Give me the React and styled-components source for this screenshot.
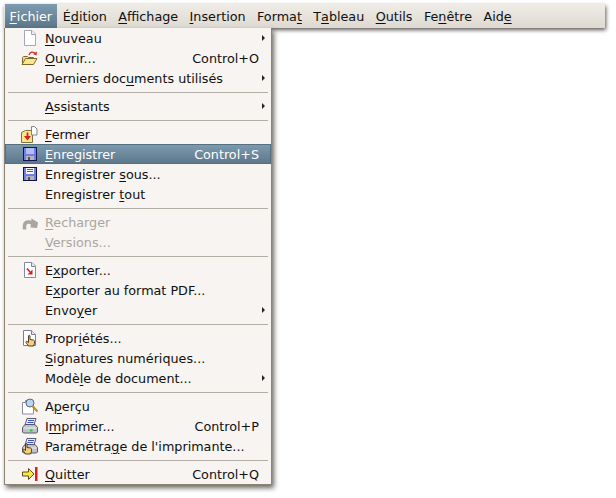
import React from "react";
import styled, { createGlobalStyle } from "styled-components";

const GlobalStyle = createGlobalStyle`
  html, body {
    margin: 0;
    background: #fff;
  }
  body {
    font-family: "DejaVu Sans", sans-serif;
    font-size: 12.75px;
    color: #101010;
  }
`;

const Window = styled.div`
  position: relative;
  width: 616px;
  height: 498px;
  padding: 4px 11px 0 4px;
  box-sizing: border-box;
  overflow: hidden;
`;

const MenuBar = styled.div`
  display: flex;
  height: 24px;
  padding-left: 1px;
  background: linear-gradient(#efece7, #dedad2);
  box-shadow: 1px 2px 4px rgba(40, 35, 30, 0.75);
`;

const BarItem = styled.div`
  display: flex;
  align-items: center;
  height: 24px;
  padding: 0 5.7px;
  box-sizing: border-box;
  color: ${(p) => (p.$active ? "#fff" : "#101010")};
  background: ${(p) => (p.$active ? "linear-gradient(#7d9cb1, #5c7689)" : "none")};
  white-space: nowrap;

  &:first-child {
    padding: 0 5px 0 4.5px;
  }
`;

const Dropdown = styled.div`
  position: absolute;
  left: 4px;
  top: 28px;
  width: 268px;
  height: 457px;
  box-sizing: border-box;
  border: 1px solid #8c8172;
  border-top: 0;
  background: #f7f4f1;
  box-shadow: 2px 3px 5px rgba(40, 35, 30, 0.7);
`;

const Row = styled.div`
  display: grid;
  grid-template-columns: 40px 1fr auto 12px;
  align-items: center;
  height: 20px;
  color: ${(p) => (p.$disabled ? "#a9a6a0" : p.$active ? "#fff" : "#101010")};
  background: ${(p) => (p.$active ? "linear-gradient(#7d9cb1, #5c7689)" : "none")};
  box-shadow: ${(p) => (p.$active ? "inset 0 0 0 1px #56707f" : "none")};
  white-space: nowrap;
`;

const IconSlot = styled.span`
  display: flex;
  justify-content: flex-end;
  padding-right: 7px;
`;

const Shortcut = styled.span`
  text-align: right;
`;

const Arrow = styled.span`
  justify-self: end;
  margin-right: 6px;
  width: 0;
  height: 0;
  border-left: 3px solid #222;
  border-top: 3px solid transparent;
  border-bottom: 3px solid transparent;
`;

const Separator = styled.div`
  height: 1px;
  margin: 4px 3px 3px;
  background: #b3aea5;
`;

const Key = styled.span`
  text-decoration: underline;
  text-decoration-thickness: 1px;
  text-underline-offset: 2px;
`;

/* 16x16 drawings of the old Office menu icons */
const Svg = ({ children }) => (
  <svg width="16" height="16" viewBox="0 0 16 16" shapeRendering="crispEdges">
    {children}
  </svg>
);

const NewIcon = () => (
  <svg width="16" height="16" viewBox="0 0 16 16">
    <path d="M2.5.5h7.5l3.5 3.5v11.5h-11z" fill="#fff" stroke="#a4a6b4" />
    <path d="M9.5.5v4h4" fill="#eeeef2" stroke="#a4a6b4" />
  </svg>
);

const OpenIcon = () => (
  <svg width="17" height="16" viewBox="0 0 17 16">
    <path d="M1.5 14V7.5l1-1h4l1 1h5v2" fill="#f4dc84" stroke="#7b6a2c" />
    <path d="M1 14.5l3.5-6H16l-3.5 6z" fill="#fbe78a" stroke="#7b6a2c" />
    <path d="M8 5C9 2 12.5 1 14 3.5" fill="none" stroke="#d42a1c" strokeWidth="1.3" />
    <path d="M16 1.5l-.5 4-3.5-1.5z" fill="#d42a1c" />
  </svg>
);

const CloseIcon = () => (
  <svg width="17" height="17" viewBox="0 0 17 17">
    <path d="M.5 6.5l4-2h7v12H.5z" fill="#f8e88e" stroke="#7c7040" />
    <path d="M10.5.5h3l2.5 2.5v6h-5.5z" fill="#fff" stroke="#80828e" />
    <path d="M6.5 6.5v5" stroke="#d8201c" strokeWidth="1.8" />
    <path d="M3 10l3.5 4.5L10 10z" fill="#d8201c" />
  </svg>
);

const SaveIcon = ({ red }) => (
  <Svg>
    <rect x="1.5" y="1.5" width="13" height="13" fill="#6e7ee6" stroke="#14144c" />
    <rect x="4" y="2" width="8" height="6" fill={red ? "#f8f8fc" : "#b4bcf4"} />
    {red && <rect x="5" y="3" width="6" height="1" fill="#e0242c" />}
    {red && <rect x="5" y="5" width="6" height="1" fill="#e0242c" />}
    <rect x="4" y="10" width="8" height="4" fill="#b4b4ba" />
    <rect x="6" y="11" width="2" height="3" fill="#50505c" />
  </Svg>
);

const ReloadIcon = () => (
  <svg width="16" height="16" viewBox="0 0 16 16">
    <path d="M2.5 15.5V12C2.5 8 6.5 7 10 9" fill="none" stroke="#a9a6a0" strokeWidth="3.5" />
    <path d="M9.5 4.5L16 8.5l-1 5.5-6.5-.5z" fill="#a9a6a0" />
  </svg>
);

const ExportIcon = () => (
  <svg width="16" height="16" viewBox="0 0 16 16">
    <path d="M2.5.5h7.5l3.5 3.5v11.5h-11z" fill="#fff" stroke="#868a9e" />
    <path d="M9.5.5v4h4" fill="#e6e6ea" stroke="#868a9e" />
    <path d="M5 6.5l3 3.5" stroke="#d8201c" strokeWidth="1.6" />
    <path d="M10.5 7.5v5h-5z" fill="#d8201c" />
  </svg>
);

const Hand = ({ x = 0, y = 0 }) => (
  <g transform={`translate(${x} ${y})`}>
    <path
      d="M3.5 1.5c0-1 1.5-1 1.5 0V5l3.5.5c.8.2 1 .8 1 1.5v2l-1 2.5h-5L1 8c-.5-1 .5-1.5 1.2-1L3.5 8z"
      fill="#f7cf7c"
      stroke="#3c2e14"
      strokeWidth=".9"
    />
  </g>
);

const PropsIcon = () => (
  <svg width="16" height="17" viewBox="0 0 16 17">
    <path d="M1.5.5h8l4 4v11h-12z" fill="#fff" stroke="#7c7e90" />
    <path d="M9.5.5v4h4" fill="#e6e6ea" stroke="#7c7e90" />
    <Hand x={3} y={4.5} />
  </svg>
);

const PreviewIcon = () => (
  <svg width="17" height="17" viewBox="0 0 17 17">
    <path d="M1.5 4.5h3v-2h6l2 2V16h-11z" fill="#fff" stroke="#8a8ca0" />
    <circle cx="9" cy="5" r="4" fill="#bcd6f2" stroke="#56688a" />
    <path d="M11.5 8l5 5.5" stroke="#c08c2c" strokeWidth="2.2" />
  </svg>
);

const Printer = () => (
  <>
    <path d="M5 .5h9l-2 6.5H3z" fill="#e8ecf8" stroke="#484c62" strokeWidth=".9" />
    <path d="M6 2.5h6M5.5 4.5h6" stroke="#3c54b8" strokeWidth="1" />
    <path d="M3 6.5h10l2.5 3V14l-1 1h-13l-1-1V9.5z" fill="#c0c2c8" stroke="#484c62" strokeWidth=".9" />
    <path d="M1.5 10h13" stroke="#f0f2f6" />
  </>
);

const PrintIcon = () => (
  <svg width="16" height="16" viewBox="0 0 16 16">
    <Printer />
    <rect x="8" y="11.5" width="2.5" height="2" fill="#1cc838" />
  </svg>
);

const PrintSetupIcon = () => (
  <svg width="16" height="17" viewBox="0 0 16 17">
    <Printer />
    <Hand x={0} y={4.5} />
  </svg>
);

const QuitIcon = () => (
  <svg width="16" height="16" viewBox="0 0 16 16">
    <path d="M.5 6h6V2.5l5.5 5.5-5.5 5.5V10h-6z" fill="#f8ea40" stroke="#5c4e14" />
    <rect x="13" y="1" width="2.5" height="14" fill="#d8201c" />
  </svg>
);

const bar = [
  { label: <><Key>F</Key>ichier</>, active: true },
  { label: <>É<Key>d</Key>ition</> },
  { label: <><Key>A</Key>ffichage</> },
  { label: <><Key>I</Key>nsertion</> },
  { label: <>Forma<Key>t</Key></> },
  { label: <>T<Key>a</Key>bleau</> },
  { label: <><Key>O</Key>utils</> },
  { label: <>Fe<Key>n</Key>être</> },
  { label: <>Aid<Key>e</Key></> },
];

const groups = [
  [
    { icon: <NewIcon />, label: <><Key>N</Key>ouveau</>, sub: true },
    { icon: <OpenIcon />, label: <><Key>O</Key>uvrir...</>, shortcut: "Control+O" },
    { label: <>Derniers doc<Key>u</Key>ments utilisés</>, sub: true },
  ],
  [{ label: <><Key>A</Key>ssistants</>, sub: true }],
  [
    { icon: <CloseIcon />, label: <><Key>F</Key>ermer</> },
    { icon: <SaveIcon />, label: <><Key>E</Key>nregistrer</>, shortcut: "Control+S", active: true },
    { icon: <SaveIcon red />, label: <>Enregistrer <Key>s</Key>ous...</> },
    { label: <>Enregistrer <Key>t</Key>out</> },
  ],
  [
    { icon: <ReloadIcon />, label: <><Key>R</Key>echarger</>, disabled: true },
    { label: <><Key>V</Key>ersions...</>, disabled: true },
  ],
  [
    { icon: <ExportIcon />, label: <>E<Key>x</Key>porter...</> },
    { label: <>E<Key>x</Key>porter au format PDF...</> },
    { label: <>Envo<Key>y</Key>er</>, sub: true },
  ],
  [
    { icon: <PropsIcon />, label: <>Propr<Key>i</Key>étés...</> },
    { label: <><Key>S</Key>ignatures numériques...</> },
    { label: <>Modè<Key>l</Key>e de document...</>, sub: true },
  ],
  [
    { icon: <PreviewIcon />, label: <>A<Key>p</Key>erçu</> },
    { icon: <PrintIcon />, label: <>I<Key>m</Key>primer...</>, shortcut: "Control+P" },
    { icon: <PrintSetupIcon />, label: <>Paramétra<Key>g</Key>e de l'imprimante...</> },
  ],
  [{ icon: <QuitIcon />, label: <><Key>Q</Key>uitter</>, shortcut: "Control+Q" }],
];

const App = () => (
  <Window>
    <GlobalStyle />
    <MenuBar>
      {bar.map((item, i) => (
        <BarItem key={i} $active={item.active}>
          {item.label}
        </BarItem>
      ))}
    </MenuBar>
    <Dropdown>
      {groups.map((group, g) => (
        <React.Fragment key={g}>
          {g > 0 && <Separator />}
          {group.map((item, i) => (
            <Row key={i} $active={item.active} $disabled={item.disabled}>
              <IconSlot>{item.icon}</IconSlot>
              <span>{item.label}</span>
              <Shortcut>{item.shortcut}</Shortcut>
              {item.sub ? <Arrow /> : <span />}
            </Row>
          ))}
        </React.Fragment>
      ))}
    </Dropdown>
  </Window>
);

export default App;
